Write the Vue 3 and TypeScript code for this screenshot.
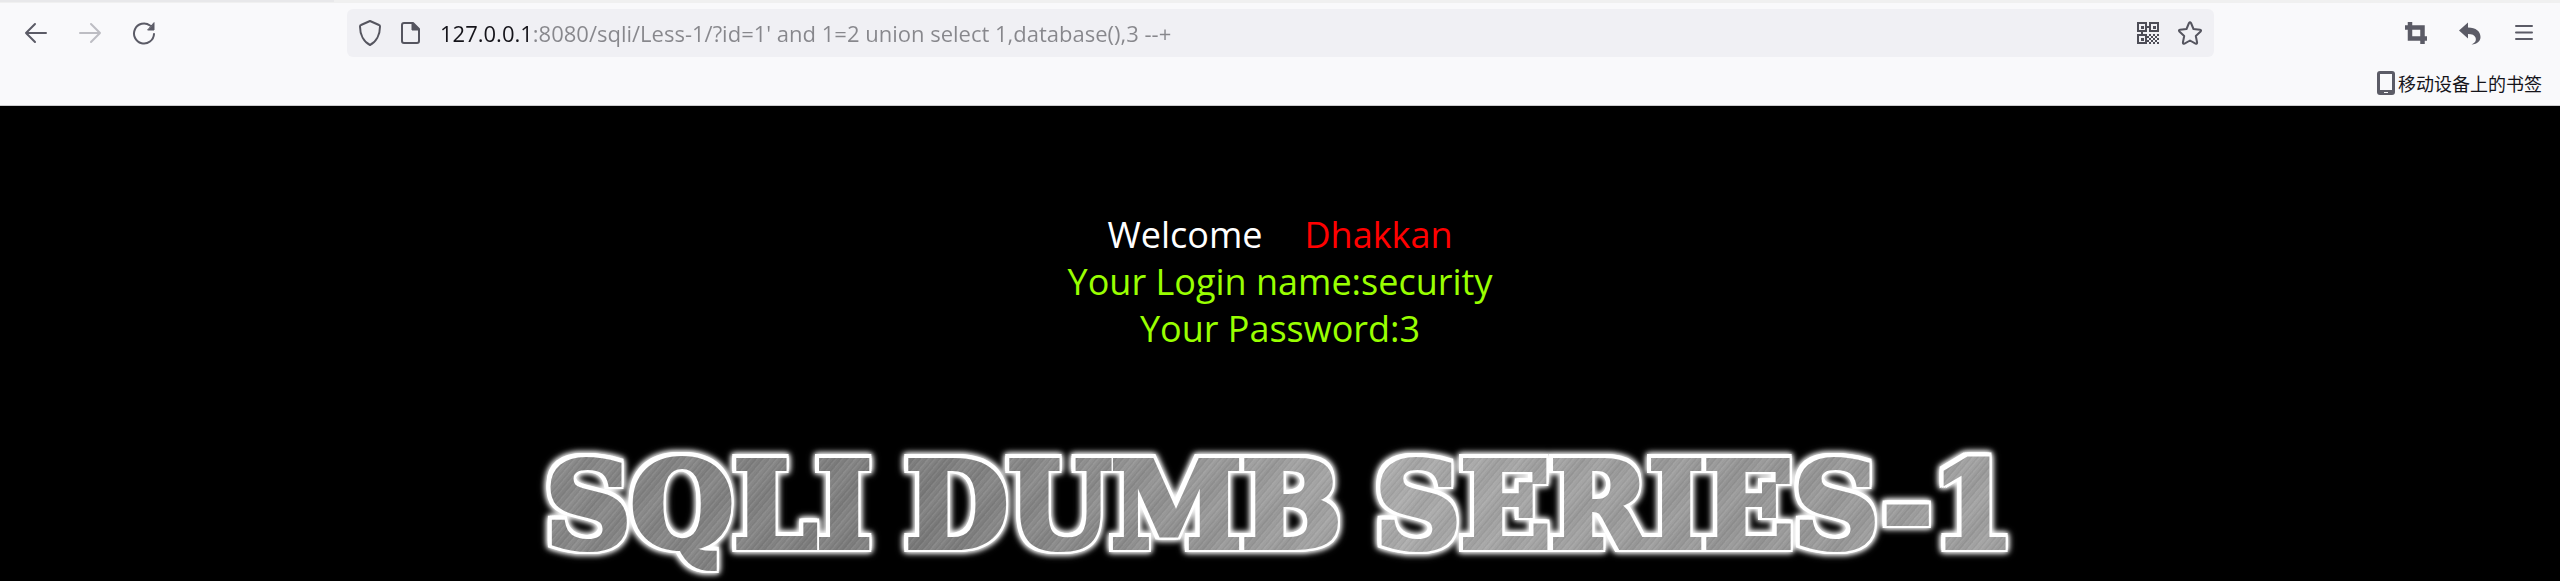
<script setup lang="ts">
import { ref } from 'vue'

const address = ref<string>("127.0.0.1:8080/sqli/Less-1/?id=1' and 1=2 union select 1,database(),3 --+")
const titleWords: string[] = ['SQLI', 'DUMB', 'SERIES-1']
const qrDots: number[][] = [
  [14, 14], [18, 14], [22, 14], [16, 16], [20, 16], [14, 18], [18, 18],
  [22, 18], [16, 20], [20, 20], [14, 22], [18, 22], [22, 22], [12, 16], [12, 20],
]
</script>

<template>
  <div class="browser">
    <header class="chrome">
      <div class="tab-strip"><div class="tab-edge"></div></div>
      <nav class="toolbar" aria-label="Navigation">
        <div class="nav-buttons">
          <button type="button" aria-label="Back">
            <svg width="24" height="24" viewBox="0 0 24 24" fill="none" stroke="#5b5b66" stroke-width="2" stroke-linecap="round" stroke-linejoin="round"><path d="M22 12H2M11 3l-9 9 9 9" /></svg>
          </button>
          <button type="button" aria-label="Forward" disabled>
            <svg width="24" height="24" viewBox="0 0 24 24" fill="none" stroke="#bdbdc3" stroke-width="2" stroke-linecap="round" stroke-linejoin="round"><path d="M2 12h20M13 3l9 9-9 9" /></svg>
          </button>
          <button type="button" aria-label="Reload">
            <svg width="24" height="24" viewBox="0 0 24 24" fill="none" stroke="#5b5b66" stroke-width="2" stroke-linecap="round"><path d="M22 13a10 10 0 1 1-4-8.500" /><path d="M22 2v7h-6z" fill="#5b5b66" stroke-width="1" stroke-linejoin="round" /></svg>
          </button>
        </div>
        <div class="url-bar">
          <button type="button" aria-label="Tracking protection">
            <svg width="24" height="26" viewBox="0 0 24 26" fill="none" stroke="#55555f" stroke-width="2" stroke-linejoin="round"><path d="M12 1l9 4q1 0 1 1.500C22 15 18 22 12 25 6 22 2 15 2 6.500Q2 5 3 5z" /></svg>
          </button>
          <button type="button" aria-label="Site information">
            <svg width="24" height="24" viewBox="0 0 24 24" fill="none" stroke="#55555f" stroke-width="2" stroke-linejoin="round"><path d="M5 2h9l6 6v12q0 2-2 2H5q-2 0-2-2V4q0-2 2-2z" /><path d="M13 2v7h7z" fill="#55555f" stroke-width="1" /></svg>
          </button>
          <input v-model="address" class="address" type="text" aria-label="Address" spellcheck="false" />
          <button type="button" aria-label="QR code">
            <svg width="24" height="24" viewBox="0 0 24 24" fill="none" stroke="#4d4d57" stroke-width="2">
              <path d="M2 2h8v8H2zM14 2h8v8h-8zM2 14h8v8H2zM10 6h4M6 10v4" />
              <g fill="#4d4d57" stroke="none">
                <path d="M5 5h3v3H5zM17 5h3v3h-3zM5 17h3v3H5z" />
                <rect v-for="(dot, i) in qrDots" :key="i" :x="dot[0] - 1" :y="dot[1] - 1" width="2" height="2" />
              </g>
            </svg>
          </button>
          <button type="button" aria-label="Bookmark this page">
            <svg width="26" height="26" viewBox="0 0 26 26" fill="none" stroke="#55555f" stroke-width="2" stroke-linejoin="round"><path d="M12 3q1-1.500 2 0l2.500 6 6.500.8q1.800.4.6 1.700L18.800 16l1.300 6.500q0 1.700-1.600 1.100L13 20.500l-5.500 3.100q-1.600.6-1.600-1.100L7.200 16l-4.800-4.500Q1.200 10.200 3 9.800L9.500 9z" /></svg>
          </button>
        </div>
        <div class="tools">
          <button type="button" aria-label="Screenshot">
            <svg width="24" height="24" viewBox="0 0 24 24" fill="none" stroke="#5b5b66" stroke-width="4.500"><path d="M1 6.500h17.500V23M6 1v16.500h17" /></svg>
          </button>
          <button type="button" aria-label="Undo">
            <svg width="24" height="24" viewBox="0 0 24 24" fill="#5b5b66"><path d="M1 9.500L10 1.500v5c8 0 12.500 4 12.500 9.500 0 4-3 7-9 7.500 4-2 5-4 4-7-1-2.500-3.500-3.500-7.500-3.500v4.500z" /></svg>
          </button>
          <button type="button" aria-label="Menu">
            <svg width="24" height="24" viewBox="0 0 24 24" stroke="#5b5b66" stroke-width="2" stroke-linecap="round"><path d="M4 5h16M4 11.500h16M4 18h16" /></svg>
          </button>
        </div>
      </nav>
      <div class="bookmarks">
        <a href="#mobile">
          <svg width="18" height="24" viewBox="0 0 18 24"><rect width="18" height="24" rx="3" fill="#5b5b66" /><rect x="3" y="3" width="12" height="16" fill="#f9f9fb" /><rect x="7" y="21" width="4" height="1" fill="#f9f9fb" /></svg>
          <span>移动设备上的书签</span>
        </a>
      </div>
    </header>
    <main class="page">
      <p class="message">
        <span class="line welcome"><span>Welcome</span><span class="name">Dhakkan</span></span>
        <span class="line">Your Login name:security</span>
        <span class="line">Your Password:3</span>
      </p>
      <h1 class="title">
        <span v-for="word in titleWords" :key="word" class="word">{{ word }}</span>
      </h1>
    </main>
  </div>
</template>

<style>
body {
  margin: 0;
  background: #000;
}
</style>

<style scoped>
.browser {
  min-height: 100vh;
  overflow: hidden;
  background: #000;
  font-family: "Open Sans", "Noto Sans", "Noto Sans CJK SC", sans-serif;
}
.chrome {
  background: #f9f9fb;
  border-bottom: 1px solid #ccccce;
}
.tab-strip {
  height: 3px;
  background: #f0f0f0;
}
.tab-edge {
  width: 334px;
  height: 2px;
  background: #e8e8ea;
}
.toolbar {
  display: flex;
  align-items: center;
  padding: 6px 24px 0;
}
button {
  display: flex;
  flex: none;
  padding: 0;
  border: 0;
  background: none;
}
.nav-buttons {
  display: flex;
  gap: 30px;
}
.url-bar {
  display: flex;
  flex: 1;
  align-items: center;
  gap: 17px;
  height: 48px;
  margin: 0 190px 0 191px;
  padding: 0 11px;
  border-radius: 6px;
  background: #f0f0f4;
}
.address {
  flex: 1;
  min-width: 0;
  height: 32px;
  padding: 0;
  border: 0;
  outline: 0;
  background: linear-gradient(90deg, #15141a 88px, #87878c 88px);
  background-clip: text;
  color: transparent;
  font: 22px/32px "Open Sans", "Noto Sans", sans-serif;
}
.tools {
  display: flex;
  gap: 30px;
}
.bookmarks {
  display: flex;
  justify-content: flex-end;
  height: 44px;
  padding: 4px 18px 0;
}
.bookmarks a {
  display: flex;
  align-items: center;
  gap: 3px;
  color: #15141a;
  font: 18px/24px "Noto Sans CJK SC", sans-serif;
  text-decoration: none;
}
.page {
  padding-top: 105px;
  text-align: center;
}
.message {
  margin: 0;
  color: #99ff00;
  font-size: 36px;
  line-height: 47px;
}
.line {
  display: block;
}
.welcome {
  display: flex;
  justify-content: center;
  gap: 42px;
  color: #fff;
}
.name {
  color: #f00;
}
.title {
  display: flex;
  justify-content: center;
  gap: 34px;
  margin: 86px 0 0;
  font: bold 118px/136px "DejaVu Serif", serif;
  filter: drop-shadow(2px 0 0 #fff) drop-shadow(-4px 0 0 #fff) drop-shadow(0 2px 0 #fff) drop-shadow(0 -4px 0 #fff) drop-shadow(0 0 3px #fff) drop-shadow(0 0 2px #ddd);
}
.word {
  background:
    repeating-linear-gradient(130deg, #ffffff10 0 1px, #fff0 2px 3px, #0000000d 4px, #0000 5px),
    repeating-linear-gradient(131deg, #ffffff0a 0, #0000000d 17px, #ffffff0a 31px),
    linear-gradient(100deg, #8a8a8a, #808080);
  background-clip: text;
  color: transparent;
  -webkit-text-stroke: 6px transparent;
}
.word:nth-child(2) {
  background:
    repeating-linear-gradient(130deg, #ffffff10 0 1px, #fff0 2px 3px, #0000000d 4px, #0000 5px),
    repeating-linear-gradient(131deg, #ffffff0a 0, #0000000d 17px, #ffffff0a 31px),
    linear-gradient(80deg, #7c7c7c, #a6a6a6);
  background-clip: text;
}
.word:nth-child(3) {
  background:
    repeating-linear-gradient(130deg, #ffffff10 0 1px, #fff0 2px 3px, #0000000d 4px, #0000 5px),
    repeating-linear-gradient(131deg, #ffffff0a 0, #0000000d 17px, #ffffff0a 31px),
    linear-gradient(100deg, #aeaeae, #989898 60%, #a4a4a4);
  background-clip: text;
}
</style>
